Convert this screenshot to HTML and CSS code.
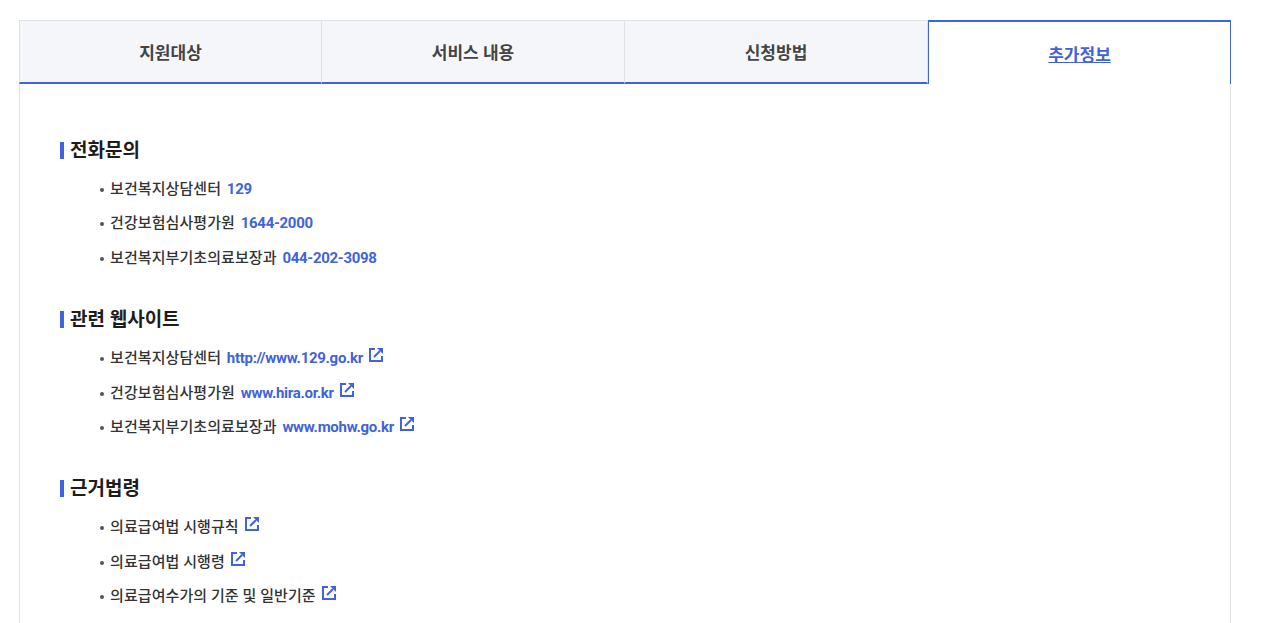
FILE: index.html
```html
<!DOCTYPE html>
<html lang="ko">
<head>
<meta charset="utf-8">
<title>추가정보</title>
<link rel="stylesheet" href="styles.css">
</head>
<body>
<svg class="sprite" width="0" height="0" aria-hidden="true">
  <symbol id="ext" viewBox="0 0 14 14">
    <path d="M6 1H1v12h12V8" fill="none" stroke="currentColor" stroke-width="2"/>
    <path d="M5 9 11 3" fill="none" stroke="currentColor" stroke-width="2"/>
    <path d="M8 0h6v6z" fill="currentColor"/>
  </symbol>
</svg>
<main class="wrap">
  <nav class="tabs">
    <a class="tab">지원대상</a>
    <a class="tab">서비스 내용</a>
    <a class="tab">신청방법</a>
    <a class="tab active">추가정보</a>
  </nav>
  <div class="panel">
    <section class="sec">
      <h3 class="head">전화문의</h3>
      <ul class="list">
        <li>보건복지상담센터 <b class="hl">129</b></li>
        <li>건강보험심사평가원 <b class="hl">1644-2000</b></li>
        <li>보건복지부기초의료보장과 <b class="hl">044-202-3098</b></li>
      </ul>
    </section>
    <section class="sec">
      <h3 class="head">관련 웹사이트</h3>
      <ul class="list">
        <li>보건복지상담센터 <b class="hl">http://www.129.go.kr</b><svg class="ext"><use href="#ext"/></svg></li>
        <li>건강보험심사평가원 <b class="hl">www.hira.or.kr</b><svg class="ext"><use href="#ext"/></svg></li>
        <li>보건복지부기초의료보장과 <b class="hl">www.mohw.go.kr</b><svg class="ext"><use href="#ext"/></svg></li>
      </ul>
    </section>
    <section class="sec">
      <h3 class="head">근거법령</h3>
      <ul class="list">
        <li>의료급여법 시행규칙<svg class="ext"><use href="#ext"/></svg></li>
        <li>의료급여법 시행령<svg class="ext"><use href="#ext"/></svg></li>
        <li>의료급여수가의 기준 및 일반기준<svg class="ext"><use href="#ext"/></svg></li>
      </ul>
    </section>
  </div>
</main>
</body>
</html>
```

FILE: styles.css
```css
html, body { margin: 0; padding: 0; height: 623px; overflow: hidden; background: #fff; }
body { font-family: Roboto, "Noto Sans CJK KR", sans-serif; color: #333; }
.sprite { position: absolute; }
.wrap { width: 1212px; margin: 20px 0 0 19px; }
.tabs { display: flex; height: 64px; box-sizing: border-box; }
.tab {
  flex: 0 0 303px; display: flex; align-items: center; justify-content: center;
  background: #f5f6fa; border: solid #dfe1e8; border-width: 1px 1px 2px 0;
  border-bottom-color: #3f63dc; font-size: 17px; font-weight: 700; color: #444;
  box-sizing: border-box;
}
.tab:first-child { border-left-width: 1px; }
.tab.active {
  background: #fff; color: #3f63dc; text-decoration: underline;
  border: solid #3f63dc; border-width: 2px 1px 0 1px;
}
.panel {
  border: solid #e2e2e2; border-width: 0 1px; padding: 53px 40px 0;
  box-sizing: border-box; height: 700px;
}
.sec { margin-bottom: 31px; }
.head {
  margin: 0 0 7px; padding-left: 10px; position: relative;
  font-size: 19px; font-weight: 700; color: #1d1d1d;
  line-height: 0; height: 28px; display: flex; align-items: center;
}
.head::before {
  content: ""; position: absolute; left: 0; top: 5px; width: 4px; height: 17px; background: #3f63dc;
}
.list { margin: 0; padding: 0 0 0 40px; list-style: none; }
.list li {
  position: relative; padding-left: 10px; font-size: 15px; line-height: 34.4px; color: #333;
  letter-spacing: 0.08px; font-weight: 500;
}
.list li::before {
  content: ""; position: absolute; left: 0; top: 16px; width: 4px; height: 4px; border-radius: 50%; background: #555;
}
.hl { color: #3f63dc; font-weight: 700; letter-spacing: -0.3px; margin-left: 2px; }
.ext { width: 14px; height: 14px; margin-left: 6px; color: #3f63dc; vertical-align: 1px; }
```
